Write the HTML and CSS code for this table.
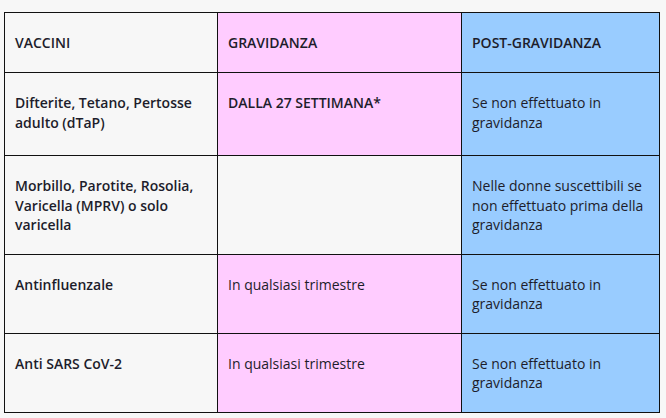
FILE: index.html
```html
<!DOCTYPE html>
<html lang="it">
<head>
<meta charset="utf-8">
<title>Vaccini</title>
<link rel="stylesheet" href="styles.css">
</head>
<body>
<div class="wrap">
<table class="vax">
  <colgroup>
    <col class="c1"><col class="c2"><col class="c3">
  </colgroup>
  <tr class="r-head">
    <td class="name">VACCINI</td>
    <td class="preg strong">GRAVIDANZA</td>
    <td class="post strong">POST-GRAVIDANZA</td>
  </tr>
  <tr class="r1">
    <td class="name">Difterite, Tetano, Pertosse adulto (dTaP)</td>
    <td class="preg strong">DALLA 27 SETTIMANA*</td>
    <td class="post">Se non effettuato in gravidanza</td>
  </tr>
  <tr class="r2">
    <td class="name">Morbillo, Parotite, Rosolia, Varicella (MPRV) o solo varicella</td>
    <td class="blank"></td>
    <td class="post">Nelle donne suscettibili se non effettuato prima della gravidanza</td>
  </tr>
  <tr class="r3">
    <td class="name">Antinfluenzale</td>
    <td class="preg">In qualsiasi trimestre</td>
    <td class="post">Se non effettuato in gravidanza</td>
  </tr>
  <tr class="r4">
    <td class="name">Anti SARS CoV-2</td>
    <td class="preg">In qualsiasi trimestre</td>
    <td class="post">Se non effettuato in gravidanza</td>
  </tr>
</table>
</div>
</body>
</html>
```
FILE: styles.css
```css
html, body {
  margin: 0;
  padding: 0;
  background: #f7f7f7;
}
.wrap {
  padding: 12px 0 0 4px;
}
.vax {
  border-collapse: collapse;
  table-layout: fixed;
  width: 655px;
  font-family: "Open Sans", sans-serif;
  font-size: 14px;
  line-height: 19.5px;
  color: #1d1d2b;
}
.c1 { width: 213px; }
.c2 { width: 244px; }
.c3 { width: 198px; }
.vax td {
  border: 1px solid #111;
  padding: 20px 10px 19px 10px;
  vertical-align: top;
  text-align: left;
}
.name {
  background: #f7f7f7;
  font-weight: 600;
}
.strong { font-weight: 600; }
.preg { background: #ffccff; }
.post { background: #99ccff; }
.blank { background: #f7f7f7; }
.r-head { height: 60px; }
.r1 { height: 83px; }
.r2 { height: 97px; }
.r3 { height: 78px; }
.r4 { height: 78px; }
```
